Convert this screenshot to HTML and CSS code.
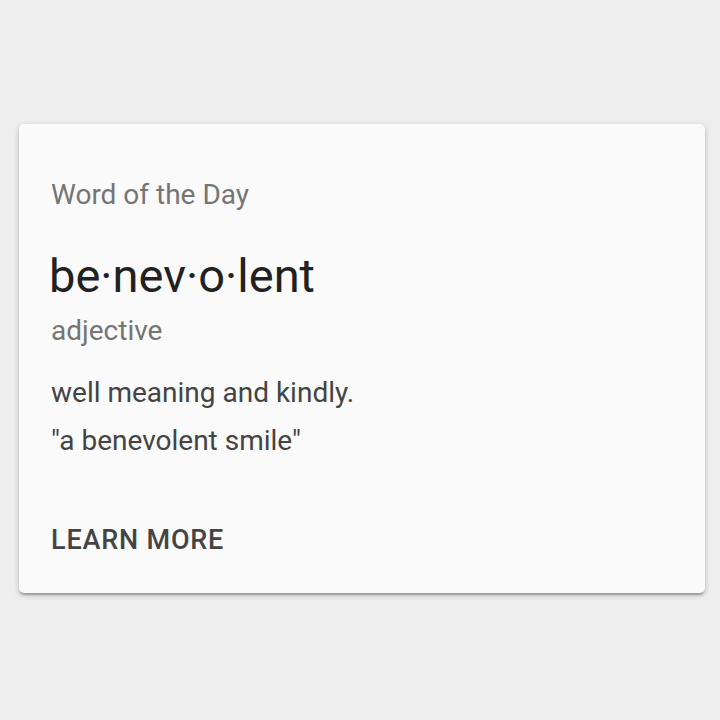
FILE: index.html
```html
<!DOCTYPE html>
<html lang="en">
<head>
<meta charset="utf-8">
<title>Word of the Day</title>
<link rel="stylesheet" href="styles.css">
</head>
<body>
<div class="card">
  <div class="card-content">
    <p class="title">Word of the Day</p>
    <h2 class="word">be·nev·o·lent</h2>
    <p class="pos">adjective</p>
    <p class="definition">well meaning and kindly.<br>"a benevolent smile"</p>
  </div>
  <div class="card-actions">
    <button class="btn" type="button">Learn More</button>
  </div>
</div>
</body>
</html>
```

FILE: styles.css
```css
html, body {
  margin: 0;
  padding: 0;
}
body {
  background: #eeeeee;
  width: 720px;
  height: 720px;
  padding: 124px 0 0 19px;
  box-sizing: border-box;
  font-family: Roboto, "Liberation Sans", sans-serif;
}
.card {
  width: 686px;
  background: #fafafa;
  border-radius: 5px;
  box-shadow: 0 2px 6px rgba(0,0,0,0.2), 0 2px 2px rgba(0,0,0,0.14), 0 4px 2px -2px rgba(0,0,0,0.12);
  padding: 51px 32px 33px 32px;
  box-sizing: border-box;
}
.card-content p, .card-content h2 {
  margin: 0;
}
.title {
  font-size: 28px;
  line-height: 40px;
  color: #757575;
}
.word {
  font-size: 47px;
  line-height: 56px;
  font-weight: 400;
  color: #212121;
  margin-top: 33px !important;
  margin-left: -2px !important;
}
.pos {
  font-size: 28px;
  line-height: 40px;
  color: #757575;
  margin-top: 7px !important;
}
.definition {
  font-size: 28px;
  line-height: 48px;
  color: #444444;
  margin-top: 18px !important;
}
.card-actions {
  display: flex;
  margin-top: 55px;
}
.btn {
  font-family: Roboto, "Liberation Sans", sans-serif;
  font-size: 27px;
  line-height: 40px;
  font-weight: 500;
  text-transform: uppercase;
  letter-spacing: 0.03em;
  color: #444444;
  background: none;
  border: 0;
  padding: 0;
  cursor: pointer;
}
```
